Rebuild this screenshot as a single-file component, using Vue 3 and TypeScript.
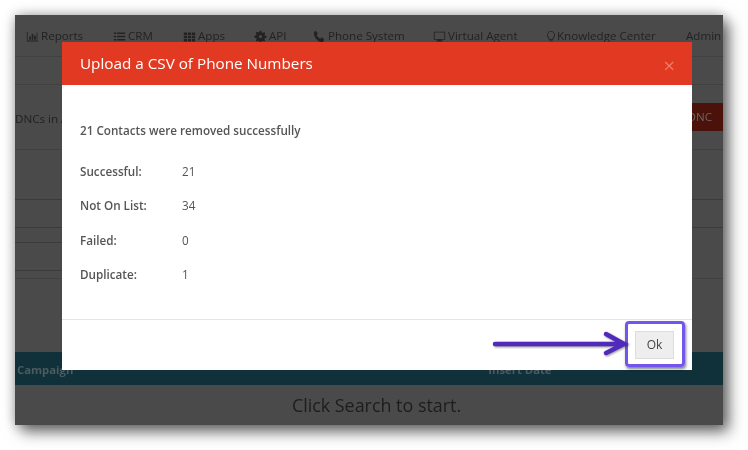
<template>
  <div class="page">
    <div class="window">
      <nav class="nav">
        <span v-for="item in navItems" :key="item.label" class="nav-item" :style="{ width: item.width + 'px' }">
          <svg v-if="item.icon" class="nav-icon" :class="{ narrow: item.narrow }" :viewBox="item.narrow ? '3 0 10 16' : '0 0 16 16'" aria-hidden="true">
            <path :d="item.icon" />
          </svg>
          {{ item.label }}
        </span>
      </nav>
      <div class="strip" />
      <div class="toolbar">
        <span class="dnc-count">DNCs in All Lists</span>
        <span class="dnc-btn">Add DNC</span>
      </div>
      <div class="form-rows">
        <div class="row-a" />
        <div class="row-b" />
        <div class="input-box" />
        <div class="row-e" />
      </div>
      <div class="table-head">
        <span class="campaign">Campaign</span>
        <span class="insert">Insert Date</span>
      </div>
      <div class="empty">Click Search to start.</div>

      <div class="modal">
        <header class="modal-head">
          <h1>Upload a CSV of Phone Numbers</h1>
          <span class="close">×</span>
        </header>
        <section class="modal-body">
          <p class="summary">21 Contacts were removed successfully</p>
          <dl class="stats">
            <div v-for="stat in stats" :key="stat.label" class="stat">
              <dt>{{ stat.label }}</dt>
              <dd>{{ stat.value }}</dd>
            </div>
          </dl>
        </section>
        <footer class="modal-foot">
          <button class="ok" type="button">Ok</button>
        </footer>
      </div>
    </div>

    <div class="callout" />
    <svg class="arrow" viewBox="0 0 140 30" aria-hidden="true">
      <path d="M4 15H131M115 5L133 15L115 24" />
    </svg>
  </div>
</template>

<script setup lang="ts">
interface NavItem {
  label: string
  width: number
  icon?: string
  narrow?: boolean
}

const navItems: NavItem[] = [
  { label: 'Reports', width: 87, icon: 'M1 2h1v11h13v1H1zM4 8h2v4H4zM7 5h2v7H7zM10 7h2v5h-2zM13 3h1v9h-1z' },
  { label: 'CRM', width: 70, icon: 'M1 3h3v2H1zM5 3h10v2H5zM1 7h3v2H1zM5 7h10v2H5zM1 11h3v2H1zM5 11h10v2H5z' },
  { label: 'Apps', width: 71, icon: 'M1 3h4v3H1zM6 3h4v3H6zM11 3h4v3h-4zM1 7h4v3H1zM6 7h4v3H6zM11 7h4v3h-4zM1 11h4v3H1zM6 11h4v3H6zM11 11h4v3h-4z' },
  { label: 'API', width: 59, icon: 'M7 1h2l.4 2 1.4.6 1.7-1.1 1.4 1.4-1.1 1.7.6 1.4 2 .4v2l-2 .4-.6 1.4 1.1 1.7-1.4 1.4-1.7-1.1-1.4.6-.4 2H7l-.4-2-1.4-.6-1.7 1.1-1.4-1.4 1.1-1.7-.6-1.4-2-.4V7l2-.4.6-1.4-1.1-1.7 1.4-1.4 1.7 1.1 1.4-.6zM8 6a2 2 0 1 0 0 4 2 2 0 0 0 0-4z' },
  { label: 'Phone System', width: 120, icon: 'M3 1l3 3-1.500 2c.8 2 2.500 3.700 4.500 4.500L11 9l3 3-2 3C6 15 1 9 1 3z' },
  { label: 'Virtual Agent', width: 114, icon: 'M1 2h14v10H10v1h2v1H4v-1h2v-1H1zM2 3v8h12V3z' },
  { label: 'Knowledge Center', width: 139, narrow: true, icon: 'M8 1a5 5 0 0 1 3 9v2H5v-2a5 5 0 0 1 3-9zM8 2a4 4 0 0 0-2 7.500V11h4V9.500A4 4 0 0 0 8 2zM6 13h4v1H6zM7 15h2v1H7z' },
  { label: 'Admin', width: 40 },
]

const stats = [
  { label: 'Successful:', value: 21 },
  { label: 'Not On List:', value: 34 },
  { label: 'Failed:', value: 0 },
  { label: 'Duplicate:', value: 1 },
]
</script>

<style>
html, body { margin: 0; background: #fff; }
</style>

<style scoped>
.page {
  position: relative;
  width: 748px;
  height: 450px;
  padding: 15px 25px 25px 15px;
  box-sizing: border-box;
  overflow: hidden;
  font-family: "Open Sans", "Noto Sans", sans-serif;
}

.window {
  position: relative;
  width: 708px;
  height: 410px;
  background: #4a4a4a;
  color: #222;
  box-shadow: 6px 7px 14px rgba(0, 0, 0, .55), 0 0 12px rgba(0, 0, 0, .3);
  overflow: hidden;
  will-change: transform;
}

.nav {
  display: flex;
  height: 42px;
  padding: 13px 0 0 11px;
  box-sizing: border-box;
  border-bottom: 1px solid #414141;
  font-size: 11.600px;
  line-height: 16px;
  white-space: nowrap;
}
.nav-item { display: flex; align-items: center; gap: 2px; flex: none; height: 16px; }
.nav-icon { width: 13px; height: 13px; fill: #222; flex: none; }
.nav-icon.narrow { width: 8px; }

.strip { height: 27px; border-bottom: 1px solid #414141; }

.toolbar {
  display: flex;
  justify-content: space-between;
  align-items: flex-start;
  height: 65px;
  padding-top: 18px;
  box-sizing: border-box;
  border-bottom: 1px solid #414141;
  font-size: 11.600px;
  line-height: 28px;
}
.dnc-count { margin-top: 2px; }
.dnc-btn {
  width: 130px;
  height: 28px;
  box-sizing: border-box;
  padding-right: 11px;
  background: #4a120b;
  color: #6e6361;
  text-align: right;
}

.form-rows { height: 202px; }
.row-a { height: 49px; border-bottom: 1px solid #3b3b3b; }
.row-b { height: 27px; border-bottom: 1px solid #3b3b3b; }
.input-box {
  width: 120px;
  height: 27px;
  margin-top: 14px;
  border-top: 1px solid #3b3b3b;
  border-bottom: 1px solid #3b3b3b;
}
.row-e { height: 7px; border-bottom: 1px solid #414141; }

.table-head {
  display: flex;
  height: 33px;
  padding: 10px 0 0 2px;
  box-sizing: border-box;
  background: #10303a;
  color: #4c5b60;
  font-size: 11.300px;
  font-weight: 700;
  line-height: 16px;
}
.insert { margin-left: 415px; }

.empty {
  height: 40px;
  padding-left: 15px;
  box-sizing: border-box;
  color: #1d1d1d;
  font-size: 17.900px;
  line-height: 40px;
  text-align: center;
}

.modal {
  position: absolute;
  left: 47px;
  top: 27px;
  width: 630px;
  height: 328px;
  display: flex;
  flex-direction: column;
  background: #fff;
  color: #555;
}
.modal-head {
  position: relative;
  height: 43px;
  flex: none;
  padding: 0 18px;
  background: #e23a22;
  color: #fff;
}
.modal-head h1 {
  margin: 0;
  font-size: 15.250px;
  font-weight: 500;
  line-height: 43px;
}
.close {
  position: absolute;
  right: 17px;
  top: 14px;
  color: #ec7d6c;
  font-size: 20px;
  line-height: 20px;
}

.modal-body {
  flex: 1;
  padding: 37px 18px 0;
  font-size: 11.700px;
  line-height: 16px;
}
.summary { margin: 0 0 25px; font-weight: 600; }
.stats { margin: 0; display: flex; flex-direction: column; gap: 18.300px; }
.stat { display: flex; height: 16px; }
.stat dt { width: 102px; font-weight: 600; }
.stat dd { margin: 0; }

.modal-foot {
  flex: none;
  display: flex;
  justify-content: flex-end;
  align-items: center;
  height: 51px;
  padding-right: 18px;
  box-sizing: border-box;
  border-top: 1px solid #e5e5e5;
}
.ok {
  width: 39px;
  height: 28px;
  padding: 0;
  border: 1px solid #ddd;
  background: #eee;
  color: #444;
  font: 12px/16px "Open Sans", sans-serif;
}

.callout {
  position: absolute;
  left: 625px;
  top: 321px;
  width: 60px;
  height: 46px;
  box-sizing: border-box;
  border: 3px solid #7354ec;
  border-radius: 4px;
  box-shadow: 1px 2px 3px rgba(0, 0, 0, .5);
}
.arrow {
  position: absolute;
  left: 491px;
  top: 329px;
  width: 140px;
  height: 30px;
  fill: none;
  stroke: #5229bd;
  stroke-width: 4.500;
  stroke-linecap: round;
  stroke-linejoin: miter;
  filter: drop-shadow(1px 1px 1px rgba(0, 0, 0, .45));
}
</style>
